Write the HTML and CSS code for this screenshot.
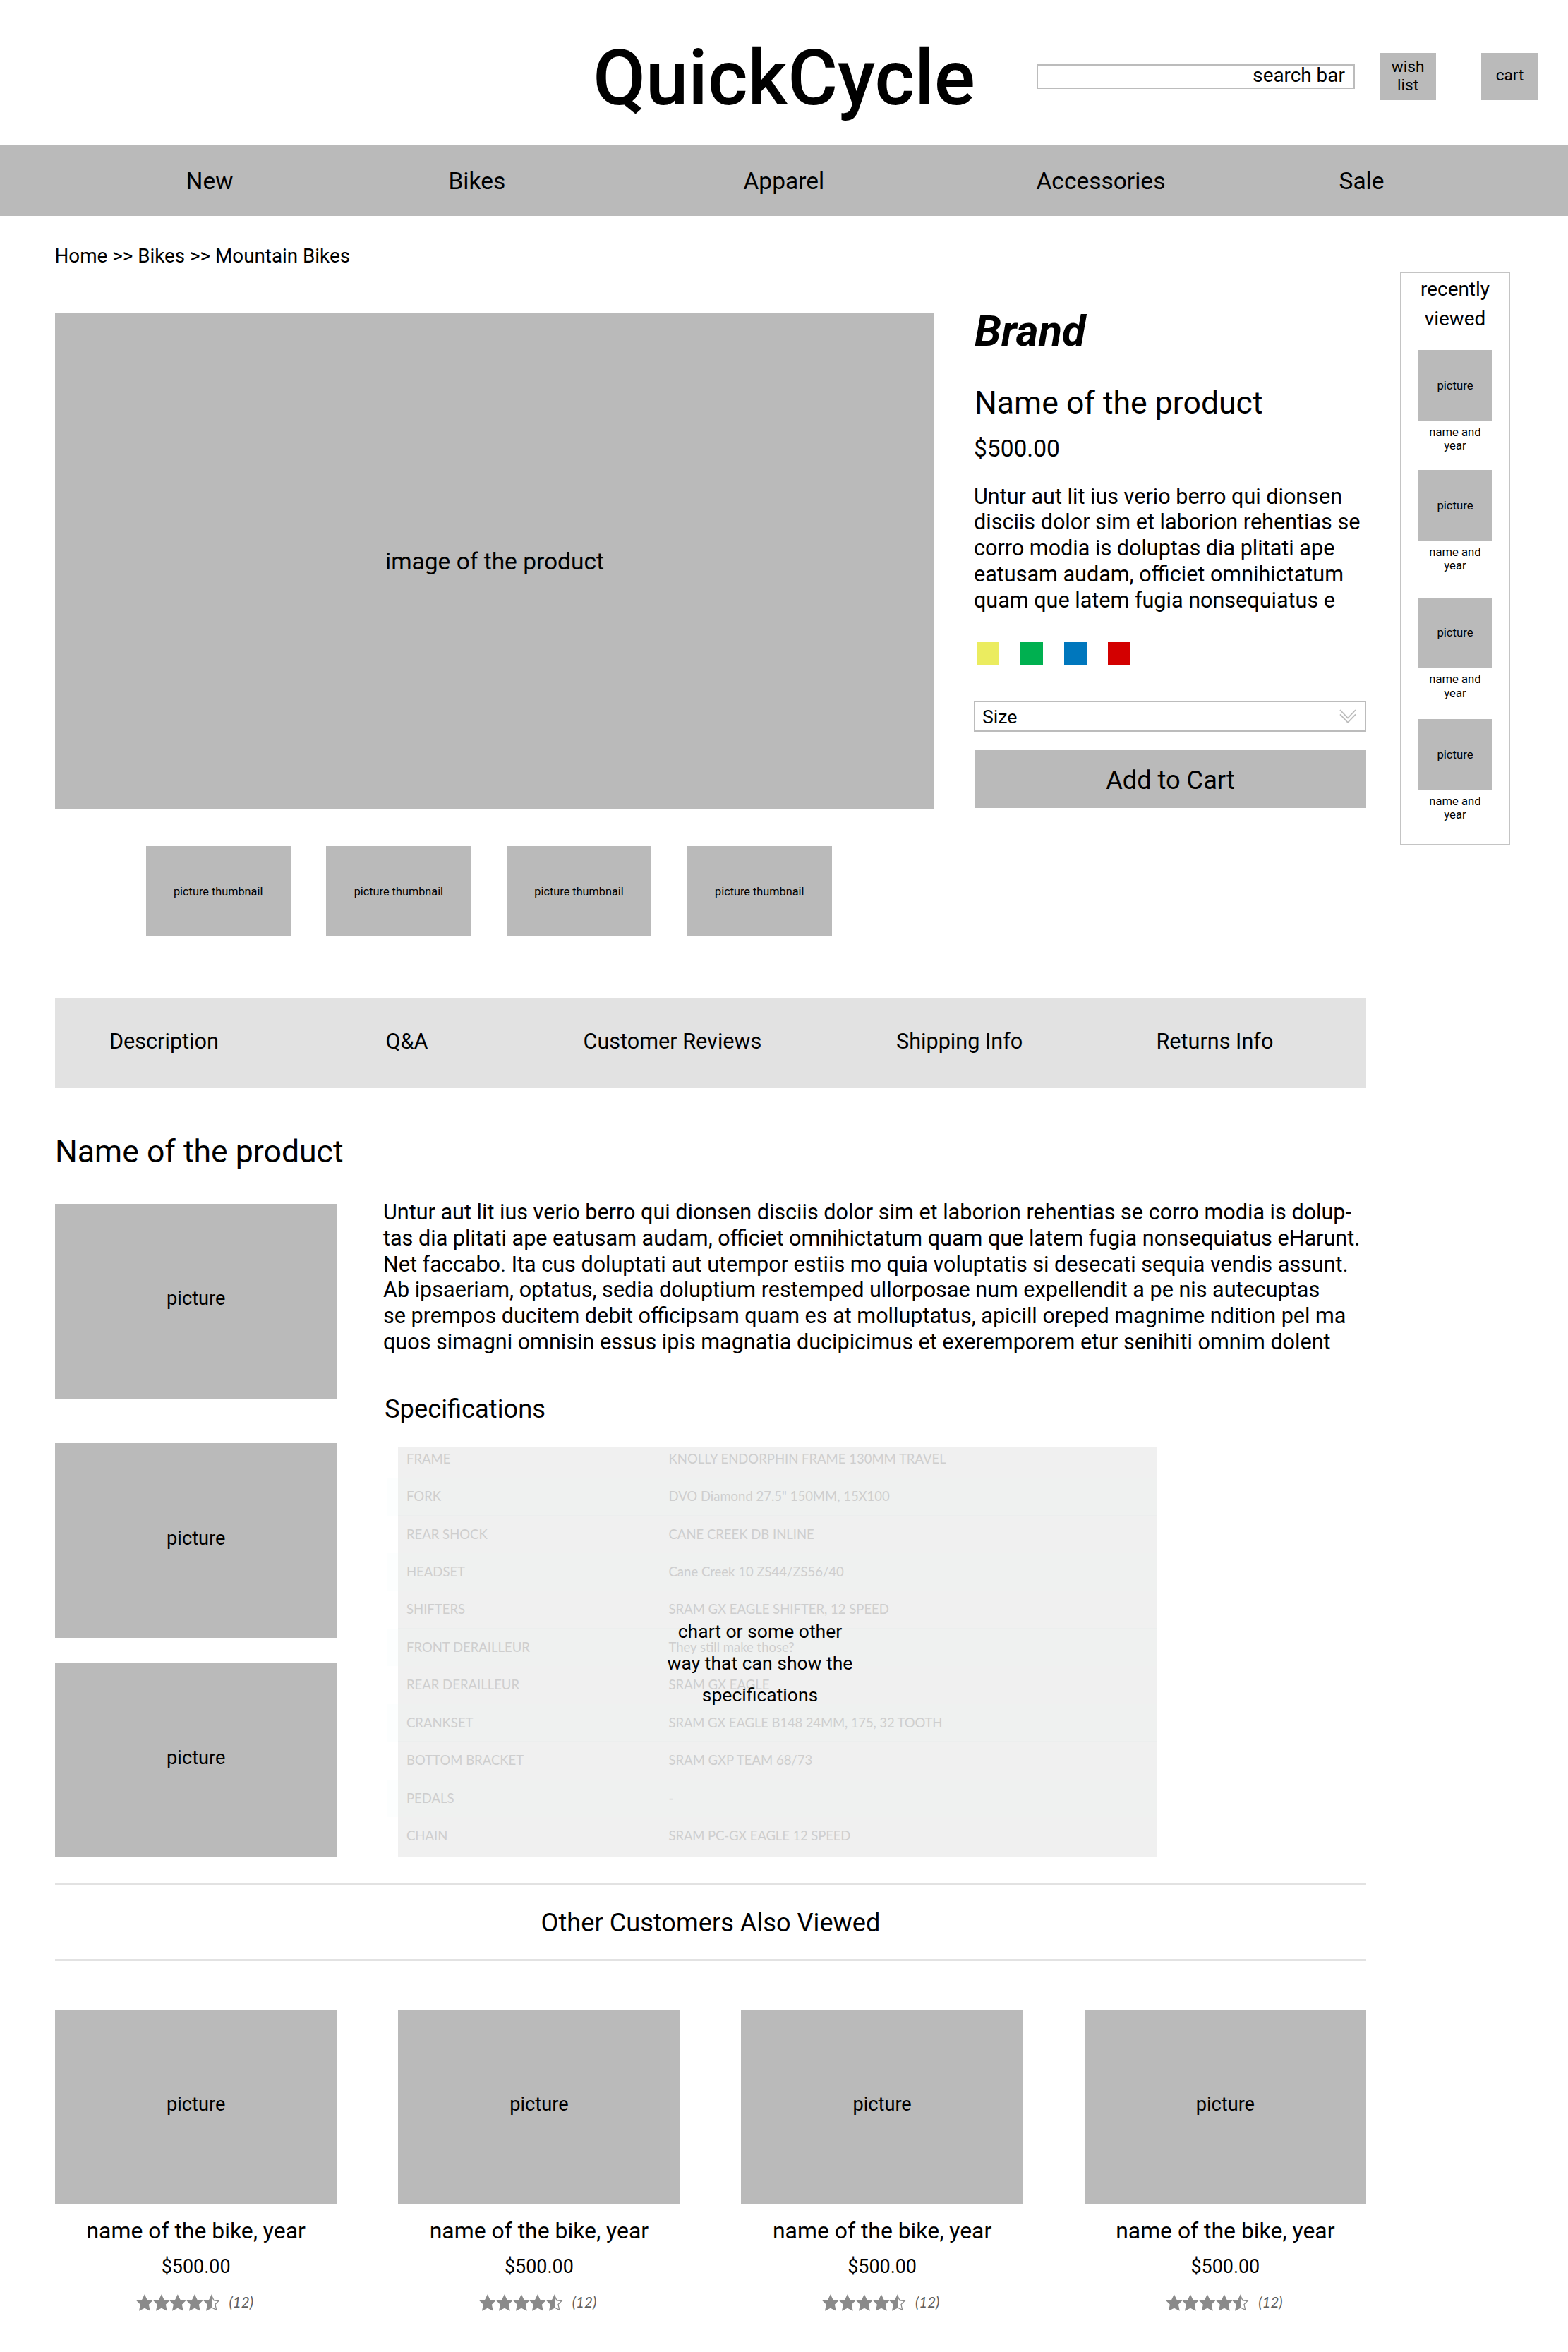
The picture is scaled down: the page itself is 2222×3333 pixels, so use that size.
FILE: index.html
```html
<!DOCTYPE html>
<html lang="en">
<head>
<meta charset="utf-8">
<title>QuickCycle</title>
<link rel="stylesheet" href="styles.css">
</head>
<body>
<svg class="sprite" aria-hidden="true">
  <symbol id="star" viewBox="0 0 24 24"><path fill="#8a8a8a" d="M12 0 15.8 8 24 8.8 18.1 14.8 20 24 12 19.8 4 24 5.9 14.8 0 8.8 8.2 8Z"/></symbol>
  <symbol id="half" viewBox="0 0 24 24"><path fill="none" stroke="#8a8a8a" stroke-width="1.3" d="M12 2 15.2 8.8 22.3 9.5 17.2 14.6 18.9 22.5 12 19"/><path fill="#8a8a8a" d="M12.4 0V19.8H12L4 24 5.9 14.8 0 8.8 8.2 8 12 0Z"/></symbol>
</svg>

<header class="header">
  <h1 class="logo">QuickCycle</h1>
  <div class="tools">
    <div class="search">search bar</div>
    <a class="tool wish">wish<br>list</a>
    <a class="tool cart">cart</a>
  </div>
</header>

<nav class="nav"><a>New</a><a>Bikes</a><a>Apparel</a><a>Accessories</a><a>Sale</a></nav>

<div class="page">
  <main class="main">
    <p class="crumbs">Home &gt;&gt; Bikes &gt;&gt; Mountain Bikes</p>

    <section class="product">
      <div class="hero box">image of the product</div>
      <div class="info">
        <h2 class="brand">Brand</h2>
        <h3 class="name">Name of the product</h3>
        <p class="price">$500.00</p>
        <p class="copy blurb">Untur aut lit ius verio berro qui dionsen<br>disciis dolor sim et laborion rehentias se<br>corro modia is doluptas dia plitati ape<br>eatusam audam, officiet omnihictatum<br>quam que latem fugia nonsequiatus e</p>
        <div class="swatches"><i class="yellow"></i><i class="green"></i><i class="blue"></i><i class="red"></i></div>
        <div class="select">Size
          <svg class="chevrons" viewBox="0 0 24 20"><path d="M1 1 12 12.5 23 1M1 7.3 12 18.8 23 7.3"/></svg>
        </div>
        <div class="add box">Add to Cart</div>
      </div>
    </section>

    <div class="thumbs">
      <div class="box">picture thumbnail</div>
      <div class="box">picture thumbnail</div>
      <div class="box">picture thumbnail</div>
      <div class="box">picture thumbnail</div>
    </div>

    <nav class="tabs"><a>Description</a><a>Q&amp;A</a><a>Customer Reviews</a><a>Shipping Info</a><a>Returns Info</a></nav>

    <h2 class="name title">Name of the product</h2>
    <section class="details">
      <div class="shots">
        <div class="box pic">picture</div>
        <div class="box pic">picture</div>
        <div class="box pic">picture</div>
      </div>
      <div class="text">
        <p class="copy">Untur aut lit ius verio berro qui dionsen disciis dolor sim et laborion rehentias se corro modia is dolup-<br>tas dia plitati ape eatusam audam, officiet omnihictatum quam que latem fugia nonsequiatus eHarunt.<br>Net faccabo. Ita cus doluptati aut utempor estiis mo quia voluptatis si desecati sequia vendis assunt.<br>Ab ipsaeriam, optatus, sedia doluptium restemped ullorposae num expellendit a pe nis autecuptas<br>se prempos ducitem debit officipsam quam es at molluptatus, apicill oreped magnime ndition pel ma<br>quos simagni omnisin essus ipis magnatia ducipicimus et exeremporem etur senihiti omnim dolent</p>
        <h3 class="spec-title">Specifications</h3>
        <div class="specs">
          <div class="row"><span>FRAME</span><span>KNOLLY ENDORPHIN FRAME 130MM TRAVEL</span></div>
          <div class="row alt line"><span>FORK</span><span>DVO Diamond 27.5" 150MM, 15X100</span></div>
          <div class="row"><span>REAR SHOCK</span><span>CANE CREEK DB INLINE</span></div>
          <div class="row alt"><span>HEADSET</span><span>Cane Creek 10 ZS44/ZS56/40</span></div>
          <div class="row line"><span>SHIFTERS</span><span>SRAM GX EAGLE SHIFTER, 12 SPEED</span></div>
          <div class="row alt"><span>FRONT DERAILLEUR</span><span>They still make those?</span></div>
          <div class="row"><span>REAR DERAILLEUR</span><span>SRAM GX EAGLE</span></div>
          <div class="row alt line"><span>CRANKSET</span><span class="tight">SRAM GX EAGLE B148 24MM, 175, 32 TOOTH</span></div>
          <div class="row"><span>BOTTOM BRACKET</span><span>SRAM GXP TEAM 68/73</span></div>
          <div class="row alt"><span>PEDALS</span><span>-</span></div>
          <div class="row"><span>CHAIN</span><span class="tight">SRAM PC-GX EAGLE 12 SPEED</span></div>
          <p class="note">chart or some other<br>way that can show the<br>specifications</p>
        </div>
      </div>
    </section>

    <h2 class="also">Other Customers Also Viewed</h2>
    <section class="cards">
      <article class="card">
        <div class="box pic">picture</div>
        <h4>name of the bike, year</h4>
        <p class="cost">$500.00</p>
        <div class="rating"><svg><use href="#star"/></svg><svg><use href="#star"/></svg><svg><use href="#star"/></svg><svg><use href="#star"/></svg><svg><use href="#half"/></svg><span>(12)</span></div>
      </article>
      <article class="card">
        <div class="box pic">picture</div>
        <h4>name of the bike, year</h4>
        <p class="cost">$500.00</p>
        <div class="rating"><svg><use href="#star"/></svg><svg><use href="#star"/></svg><svg><use href="#star"/></svg><svg><use href="#star"/></svg><svg><use href="#half"/></svg><span>(12)</span></div>
      </article>
      <article class="card">
        <div class="box pic">picture</div>
        <h4>name of the bike, year</h4>
        <p class="cost">$500.00</p>
        <div class="rating"><svg><use href="#star"/></svg><svg><use href="#star"/></svg><svg><use href="#star"/></svg><svg><use href="#star"/></svg><svg><use href="#half"/></svg><span>(12)</span></div>
      </article>
      <article class="card">
        <div class="box pic">picture</div>
        <h4>name of the bike, year</h4>
        <p class="cost">$500.00</p>
        <div class="rating"><svg><use href="#star"/></svg><svg><use href="#star"/></svg><svg><use href="#star"/></svg><svg><use href="#star"/></svg><svg><use href="#half"/></svg><span>(12)</span></div>
      </article>
    </section>
  </main>

  <aside class="recent">
    <h3>recently<br>viewed</h3>
    <div class="seen"><div class="box">picture</div><p>name and<br>year</p></div>
    <div class="seen"><div class="box">picture</div><p>name and<br>year</p></div>
    <div class="seen wide"><div class="box">picture</div><p>name and<br>year</p></div>
    <div class="seen"><div class="box">picture</div><p>name and<br>year</p></div>
  </aside>
</div>
</body>
</html>
```
FILE: styles.css
```css
* { box-sizing: border-box; margin: 0; padding: 0; font-weight: 400; }
body { width: 2222px; background: #fff; color: #000; font-family: Roboto, sans-serif; white-space: nowrap; }
.sprite { display: none; }
.box { display: flex; align-items: center; justify-content: center; background: #bababa; }

/* Header */
.header { display: grid; grid-template-columns: 1fr auto 1fr; align-items: start; height: 206px; }
.logo { grid-column: 2; margin-top: 56px; font-size: 108.5px; font-weight: 500; line-height: 110px; }
.tools { display: flex; padding: 75px 0 0 87px; }
.search { width: 451px; height: 35px; margin-top: 16px; padding-right: 12px; border: 2px solid #bcbcbc; font-size: 27.85px; line-height: 28px; text-align: right; }
.tool { display: flex; align-items: center; justify-content: center; width: 80.5px; height: 66.5px; background: #bababa; font-size: 22.7px; line-height: 26.7px; text-align: center; }
.wish { margin-left: 35px; }
.cart { margin-left: 64px; padding-bottom: 2px; }
.nav { display: grid; grid-template-columns: 372px 418px 415px 429px auto; height: 99.5px; padding-left: 263.5px; background: #bababa; font-size: 33.5px; line-height: 101.5px; }

/* Page columns */
.page { display: flex; align-items: flex-start; padding-left: 78px; }
.main { width: 1858px; }
.crumbs { margin: 40.5px 0 62.5px -0.5px; font-size: 27.8px; line-height: 34px; }

/* Product */
.product { display: flex; gap: 56px; height: 703.5px; }
.hero { width: 1246px; padding-top: 2px; font-size: 33.5px; }
.info { width: 556px; }
.brand { padding-left: 1px; font-size: 61.4px; font-weight: 700; font-style: italic; line-height: 52px; }
.name { font-size: 44.6px; line-height: 52px; }
.info .name { margin: 50px 0 0 1px; }
.price { margin-top: 19px; font-size: 33.5px; line-height: 40px; }
.copy { font-size: 30.57px; line-height: 36.8px; }
.blurb { margin-top: 30px; }
.swatches { display: flex; gap: 30.5px; margin: 41px 0 0 4px; }
.swatches i { width: 31.5px; height: 31.5px; }
.yellow { background: #ebec5f; }
.green { background: #00b050; }
.blue { background: #0077bd; }
.red { background: #d30000; }
.select { display: flex; justify-content: space-between; height: 44px; margin-top: 51.5px; padding: 0 12px 0 10px; border: 2px solid #bcbcbc; font-size: 26.65px; line-height: 43px; }
.chevrons { width: 24px; height: 20px; margin-top: 10px; fill: none; stroke: #bcbcbc; stroke-width: 1.8; }
.add { width: 554px; height: 82.5px; margin: 25.5px 0 0 1.5px; padding-top: 3px; font-size: 36.2px; }

.thumbs { display: flex; gap: 50.7px; margin: 53px 0 87.5px 128.7px; }
.thumbs .box { width: 205px; height: 127.5px; padding-top: 2px; font-size: 16.3px; }

/* Tabs */
.tabs { display: grid; grid-template-columns: 391.5px 280px 443.5px 368.5px auto; height: 127.5px; padding-left: 77px; background: #e2e2e2; font-size: 30.6px; line-height: 124.5px; }

/* Details */
.title { margin: 64px 0 48.5px; }
.details { display: flex; gap: 65.5px; }
.pic { height: 275.7px; padding-bottom: 7px; font-size: 27.2px; }
.shots { width: 399.5px; }
.shots .pic:nth-child(2) { margin: 63.5px 0 35.5px; }
.text { margin-top: -6px; }
.spec-title { margin: 54px 0 31.5px 2px; font-size: 36.3px; line-height: 44px; }
.specs { position: relative; width: 1075.5px; height: 581px; margin-left: 21px; background: #f0f0f0; color: #cecece; font: 18.5px Lato, sans-serif; }
.row { display: grid; grid-template-columns: 371.5px auto; height: 53.44px; padding-left: 12px; line-height: 52.6px; }
.row:first-child { height: 43.8px; line-height: 34px; }
.tight { letter-spacing: -0.12px; }
.alt { background: #eff1f0; box-shadow: -16px 0 #fcfefe; }
.line { border-bottom: 1px solid #eceeee; }
.note { position: absolute; top: 239px; left: 0; width: 1026px; color: #000; font: 26.5px/45px Roboto, sans-serif; text-align: center; }

/* Also viewed */
.also { height: 110.5px; margin-top: 36px; border: solid #e2e2e2; border-width: 3px 0; font-size: 36.2px; line-height: 107px; text-align: center; }
.cards { display: flex; justify-content: space-between; margin-top: 69px; }
.card { width: 399.3px; text-align: center; }
.card h4 { margin-top: 19px; font-size: 31.9px; line-height: 38px; }
.cost { margin-top: 15px; font-size: 26.9px; line-height: 34px; }
.rating { display: flex; margin: 22px 0 0 115px; }
.rating svg { width: 23.7px; height: 24px; }
.rating span { margin-left: 13px; color: #606060; font: italic 20.6px/22px Lato, sans-serif; }

/* Recently viewed */
.recent { width: 156px; height: 813px; margin: 79.5px 0 0 48px; border: 2px solid #c4c4c4; font-size: 16.65px; text-align: center; }
.recent h3 { margin: 2px 0 23px; font-size: 27.9px; line-height: 42px; }
.seen { width: 104px; height: 170px; margin: 0 auto; }
.seen.wide { height: 172.5px; margin-top: 10.5px; }
.seen .box { height: 100px; }
.seen p { margin-top: 6.5px; line-height: 19.5px; }
```
